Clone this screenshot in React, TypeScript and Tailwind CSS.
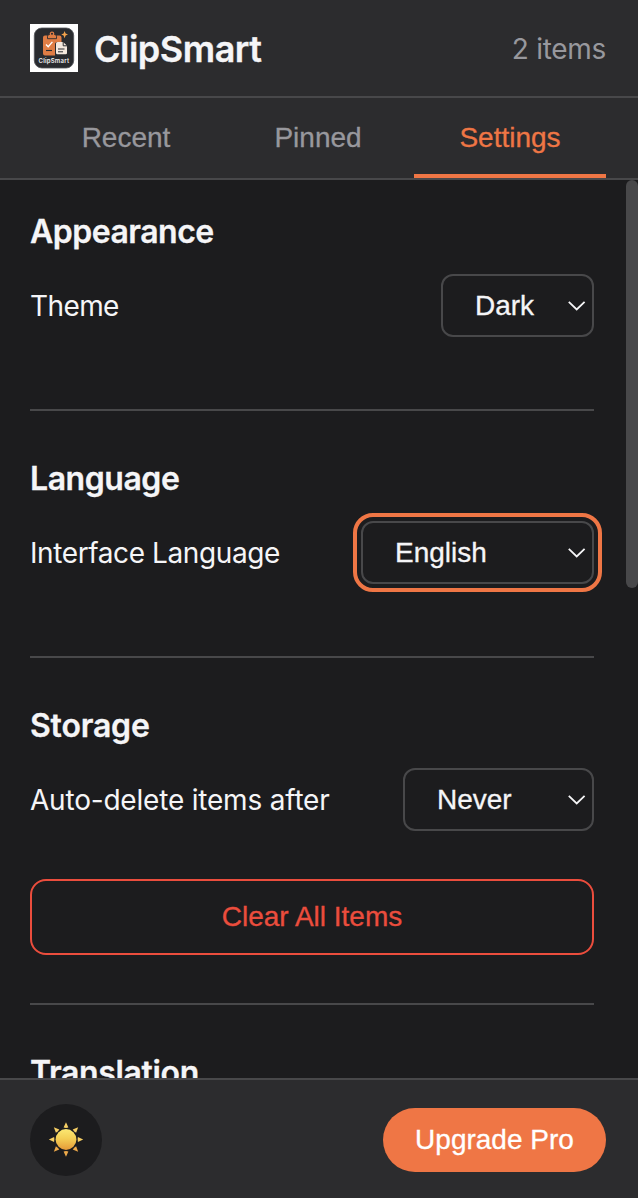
import React from 'react';

const tabs = ['Recent', 'Pinned', 'Settings'];

function Logo() {
  return (
    <svg className="h-12 w-12 shrink-0" viewBox="0 0 48 48" aria-hidden="true">
      <rect width="48" height="48" fill="#fff" />
      <rect x="4.3" y="4" width="39.4" height="40" rx="7.5" fill="#292b2f" stroke="#53565a" strokeWidth=".8" />
      <path d="M15 11.5h14.5a2 2 0 0 1 2 2V18h-4a2.500 2.500 0 0 0-2.500 2.500V31.500H15a2 2 0 0 1-2-2v-16a2 2 0 0 1 2-2z" fill="#df7d45" />
      <path d="M17.500 14.700v-2.400a1.800 1.800 0 0 1 1.800-1.800h5.400a1.800 1.800 0 0 1 1.800 1.800v2.400z" fill="#df7d45" stroke="#292b2f" strokeWidth=".9" />
      <circle cx="22" cy="9.800" r="1.700" fill="#292b2f" stroke="#df7d45" strokeWidth="1.300" />
      <path d="M16 20.500l2.200 2.200 4.200-4.800" fill="none" stroke="#fff" strokeWidth="1.400" />
      <path d="M16 26.500h6" stroke="#292b2f" strokeWidth="1.100" />
      <path d="M27.500 18h5.700l3.800 3.800v7.200a1.300 1.300 0 0 1-1.300 1.300h-8.200a1.500 1.500 0 0 1-1.500-1.500v-9.300a1.500 1.500 0 0 1 1.500-1.500z" fill="#f4e9df" />
      <path d="M33.200 18v3.800H37M28 25h6.500M28 27.800h5" fill="none" stroke="#292b2f" strokeWidth="1" />
      <path d="M34.600 7l1 2.600 2.400 1-2.400 1-1 2.600-1-2.600-2.400-1 2.400-1z" fill="#f2a24c" />
      <text x="8.500" y="38.500" textLength="30.500" fontSize="6" fontWeight="600" fill="#f2f2f2" fontFamily="Inter, sans-serif">ClipSmart</text>
    </svg>
  );
}

function Sun() {
  return (
    <svg className="h-9 w-9" viewBox="-18 -17.5 36 36" aria-hidden="true">
      <defs>
        <linearGradient id="disc" x1="0" y1="0" x2="0" y2="1">
          <stop offset="0" stopColor="#fbe773" />
          <stop offset=".45" stopColor="#f4cf55" />
          <stop offset="1" stopColor="#e59a38" />
        </linearGradient>
      </defs>
      <circle r="10.400" fill="url(#disc)" />
      {[0, 45, 90, 135, 180, 225, 270, 315].map((angle) => (
        <path
          key={angle}
          d="M0-17.200L2.400-11.900Q0-11.300-2.400-11.900Z"
          transform={`rotate(${angle})`}
          fill={angle > 90 && angle < 270 ? '#eda94a' : '#f6cf65'}
        />
      ))}
    </svg>
  );
}

function Select({ value, className }: { value: string; className: string }) {
  return (
    <button
      className={`flex h-[63px] items-center justify-between rounded-[12px] border-2 border-[#48484a] bg-[#1c1c1e] pr-[6px] pl-8 font-['Liberation_Sans',sans-serif] text-[28px] text-[#f5f5f7] [-webkit-text-stroke:0.3px_#f5f5f7] ${className}`}
    >
      <span>{value}</span>
      <svg className="h-[12px] w-[19px]" viewBox="0 0 19 12" fill="none" aria-hidden="true">
        <path d="M1.800 1.800L9.700 9.500L17.600 1.800" stroke="#f5f5f7" strokeWidth="1.800" />
      </svg>
    </button>
  );
}

function Heading({ children, className }: { children: React.ReactNode; className: string }) {
  return (
    <h2
      className={`h-[38px] pt-px text-[32px] leading-[38px] font-semibold whitespace-nowrap [-webkit-text-stroke:0.3px_#f5f5f7] ${className}`}
    >
      {children}
    </h2>
  );
}

function Row({ children }: { children: React.ReactNode }) {
  return <div className="mt-6 flex h-[63px] items-center justify-between">{children}</div>;
}

export default function App() {
  return (
    <div className="flex h-[1198px] w-[638px] flex-col overflow-hidden bg-[#1c1c1e] font-[Inter,sans-serif] text-[#f5f5f7]">
      <header className="flex h-[98px] shrink-0 items-center justify-between border-b-2 border-[#48484a] bg-[#2c2c2e] pr-8 pl-[30px]">
        <div className="flex items-center gap-4">
          <Logo />
          <h1 className="pt-[2px] text-[36px] leading-[44px] font-semibold tracking-[-0.5px] [-webkit-text-stroke:0.3px_#f5f5f7]">ClipSmart</h1>
        </div>
        <span className="pt-[2px] text-[28px] tracking-[-0.3px] text-[#98989d]">2 items</span>
      </header>

      <nav className="flex h-[82px] shrink-0 border-b-2 border-[#48484a] bg-[#2c2c2e] pr-8 pl-[30px] font-['Liberation_Sans',sans-serif] text-[28px]">
        {tabs.map((tab) => (
          <button
            key={tab}
            className={
              tab === 'Settings'
                ? 'flex-1 border-b-4 border-[#ef7645] pt-[3px] text-[#ef7645] [-webkit-text-stroke:0.3px_#ef7645]'
                : 'flex-1 border-b-4 border-transparent pt-[3px] text-[#98989d] [-webkit-text-stroke:0.3px_#98989d]'
            }
          >
            {tab}
          </button>
        ))}
      </nav>

      <div className="flex min-h-0 flex-1 overflow-hidden">
        <main className="w-[626px] shrink-0 pt-8 pr-8 pl-[30px]">
          <section className="border-b-2 border-[#48484a] pb-[72px]">
            <Heading className="tracking-[-0.5px]">Appearance</Heading>
            <Row>
              <span className="text-[28px] tracking-[-0.6px]">Theme</span>
              <Select value="Dark" className="w-[153px]" />
            </Row>
          </section>
          <section className="border-b-2 border-[#48484a] pt-12 pb-[72px]">
            <Heading className="tracking-[-0.45px]">Language</Heading>
            <Row>
              <span className="pt-px text-[28px] tracking-[-0.4px]">Interface Language</span>
              <Select value="English" className="w-[233px] outline-4 outline-offset-4 outline-[#ef7645]" />
            </Row>
          </section>
          <section className="border-b-2 border-[#48484a] pt-12 pb-12">
            <Heading className="tracking-[-0.2px]">Storage</Heading>
            <Row>
              <span className="text-[28px] tracking-[-0.2px]">Auto-delete items after</span>
              <Select value="Never" className="w-[191px]" />
            </Row>
            <button className="mt-12 block h-[76px] w-full rounded-[16px] border-2 border-[#eb4d3d] font-['Liberation_Sans',sans-serif] text-[28px] text-[#eb4d3d] [-webkit-text-stroke:0.3px_#eb4d3d]">
              Clear All Items
            </button>
          </section>
          <section className="pt-12">
            <Heading className="tracking-[-0.35px]">Translation</Heading>
          </section>
        </main>
        <div className="h-[408px] w-3 rounded-[6px] bg-[#48484a]" />
      </div>

      <footer className="flex h-[120px] shrink-0 items-center justify-between border-t-2 border-[#48484a] bg-[#2c2c2e] pt-[2px] pr-8 pl-[30px]">
        <button className="flex h-[72px] w-[72px] items-center justify-center rounded-full bg-[#1c1c1e]" aria-label="Light theme">
          <Sun />
        </button>
        <button className="h-16 w-[223px] rounded-full bg-[#ef7645] font-['Liberation_Sans',sans-serif] text-[28px] text-white [-webkit-text-stroke:0.3px_white]">
          Upgrade Pro
        </button>
      </footer>
    </div>
  );
}
